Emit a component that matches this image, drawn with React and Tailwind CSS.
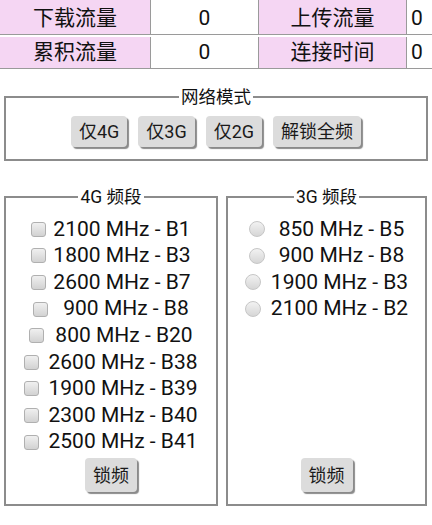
const bands4g = [
  { label: '2100 MHz - B1', gap: 'ml-[7px]' },
  { label: '1800 MHz - B3', gap: 'ml-[7px]' },
  { label: '2600 MHz - B7', gap: 'ml-[7px]' },
  { label: '900 MHz - B8', gap: 'ml-[15px]' },
  { label: '800 MHz - B20', gap: 'ml-[11px]' },
  { label: '2600 MHz - B38', gap: 'ml-[9px]' },
  { label: '1900 MHz - B39', gap: 'ml-[9px]' },
  { label: '2300 MHz - B40', gap: 'ml-[9px]' },
  { label: '2500 MHz - B41', gap: 'ml-[9px]' },
];

const bands3g = [
  { label: '850 MHz - B5', gap: 'ml-[14px]' },
  { label: '900 MHz - B8', gap: 'ml-[14px]' },
  { label: '1900 MHz - B3', gap: 'ml-[10px]' },
  { label: '2100 MHz - B2', gap: 'ml-[10px]' },
];

const modes = ['仅4G', '仅3G', '仅2G', '解锁全频'];

function Btn({ children, className = '' }) {
  return (
    <button className={"rounded-[4px] bg-[#dcdcdc] px-[8px] text-[18px] text-[#1a1a1a] shadow-[2px_2px_1px_#8a8a8a] " + className}>
      {children}
    </button>
  );
}

function Checkbox() {
  return <span className="inline-block h-[15px] w-[15px] shrink-0 rounded-[3px] border border-[#b0b0b0] bg-linear-to-b from-[#f0f0f0] to-[#d2d2d2]" />;
}

function Radio() {
  return <span className="inline-block h-[16px] w-[16px] shrink-0 rounded-full border border-[#c6c6c6] bg-linear-to-b from-[#f2f2f2] to-[#d6d6d6]" />;
}

export default function App() {
  return (
    <div className="h-[525px] w-[432px] overflow-hidden bg-white font-[family-name:Roboto,'Noto_Sans_CJK_SC',sans-serif] text-[#111]">
      {/* stats table */}
      <div className="grid grid-cols-[151px_108px_148px_1fr] gap-y-[2px] text-[21px]">
        <div className="flex h-[35px] items-center justify-center border-r border-b border-[#9a9a9a] bg-[#f5d6f3] pt-[3px]">下载流量</div>
        <div className="flex h-[35px] items-center justify-center border-r border-b border-[#9a9a9a] pt-[3px]">0</div>
        <div className="flex h-[35px] items-center justify-center border-r border-b border-[#9a9a9a] bg-[#f5d6f3] pt-[3px]">上传流量</div>
        <div className="flex h-[35px] items-center border-b border-[#9a9a9a] pl-[4px] pt-[3px]">0</div>
        <div className="flex h-[32px] items-center justify-center border-r border-b border-[#9a9a9a] bg-[#f5d6f3]">累积流量</div>
        <div className="flex h-[32px] items-center justify-center border-r border-b border-[#9a9a9a]">0</div>
        <div className="flex h-[32px] items-center justify-center border-r border-b border-[#9a9a9a] bg-[#f5d6f3]">连接时间</div>
        <div className="flex h-[32px] items-center border-b border-[#9a9a9a] pl-[4px]">0</div>
      </div>

      {/* network mode */}
      <fieldset className="mt-[17px] ml-[4px] w-[424px] border-2 border-[#8c8c8c] px-0 pb-[12px]">
        <legend className="mx-auto px-[2px] text-[17.5px] leading-[22px]">网络模式</legend>
        <div className="mt-[8px] flex justify-center gap-[11px]">
          {modes.map(m => (
            <Btn key={m} className="h-[31px]">{m}</Btn>
          ))}
        </div>
      </fieldset>

      <div className="mt-[25px] ml-[4px] flex gap-[8px]">
        {/* 4G bands */}
        <fieldset className="w-[214px] border-2 border-[#8c8c8c] pb-[12px]">
          <legend className="mx-auto px-[2px] text-[17.5px] leading-[22px]">4G 频段</legend>
          <div className="mt-[8px] flex h-[276px] flex-col items-center">
            {bands4g.map(b => (
              <div key={b.label} className="flex h-[26.6px] items-center text-[21px]">
                <Checkbox />
                <span className={b.gap}>{b.label}</span>
              </div>
            ))}
            <Btn className="mt-auto h-[34px]">锁频</Btn>
          </div>
        </fieldset>

        {/* 3G bands */}
        <fieldset className="w-[201px] border-2 border-[#8c8c8c] pb-[12px]">
          <legend className="mx-auto px-[2px] text-[17.5px] leading-[22px]">3G 频段</legend>
          <div className="mt-[8px] flex h-[276px] flex-col items-center">
            {bands3g.map(b => (
              <div key={b.label} className="flex h-[26.6px] items-center text-[21px]">
                <Radio />
                <span className={b.gap}>{b.label}</span>
              </div>
            ))}
            <Btn className="mt-auto h-[34px]">锁频</Btn>
          </div>
        </fieldset>
      </div>
    </div>
  );
}
